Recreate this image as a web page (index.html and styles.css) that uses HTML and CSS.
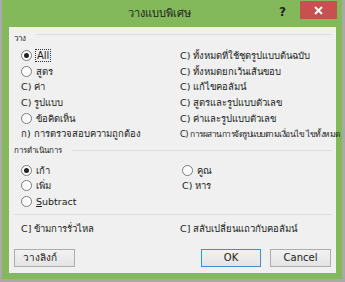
FILE: index.html
```html
<!DOCTYPE html>
<html lang="th">
<head>
<meta charset="utf-8">
<title>วางแบบพิเศษ</title>
<link rel="stylesheet" href="styles.css">
</head>
<body>
<div class="window">
  <div class="titlebar">
    <div class="title">วางแบบพิเศษ</div>
    <div class="help">?</div>
    <div class="close"><svg width="9" height="9" viewBox="0 0 9 9"><path d="M1 1L8 8M8 1L1 8" stroke="#fff" stroke-width="2"/></svg></div>
  </div>
  <div class="content">
    <div class="group-head"><span class="label">วาง</span><span class="rule"></span></div>
    <div class="cols paste">
      <div class="col">
        <div class="row"><span class="radio on"></span><span class="focus">All</span></div>
        <div class="row"><span class="radio"></span>สูตร</div>
        <div class="row">C) ค่า</div>
        <div class="row">C) รูปแบบ</div>
        <div class="row"><span class="radio"></span>ข้อคิดเห็น</div>
        <div class="row">ก) การตรวจสอบความถูกต้อง</div>
      </div>
      <div class="col">
        <div class="row">C) ทั้งหมดที่ใช้ชุดรูปแบบต้นฉบับ</div>
        <div class="row">C) ทั้งหมดยกเว้นเส้นขอบ</div>
        <div class="row">C) แก้ไขคอลัมน์</div>
        <div class="row">C) สูตรและรูปแบบตัวเลข</div>
        <div class="row">C) ค่าและรูปแบบตัวเลข</div>
        <div class="row tight">C) การผสานการจัดรูปแบบตามเงื่อนไข ไขทั้งหมด</div>
      </div>
    </div>
    <div class="group-head second"><span class="label">การดำเนินการ</span><span class="rule"></span></div>
    <div class="cols ops">
      <div class="col">
        <div class="row"><span class="radio on"></span>เก้า</div>
        <div class="row"><span class="radio"></span>เพิ่ม</div>
        <div class="row"><span class="radio"></span><span><u>S</u>ubtract</span></div>
      </div>
      <div class="col right">
        <div class="row"><span class="radio"></span>คูณ</div>
        <div class="row">C) หาร</div>
      </div>
    </div>
    <div class="sep"></div>
    <div class="cols checks">
      <div class="col"><div class="row">C] ข้ามการรั่วไหล</div></div>
      <div class="col"><div class="row">C] สลับเปลี่ยนแถวกับคอลัมน์</div></div>
    </div>
    <div class="buttons">
      <button class="btn link">วางลิงก์</button>
      <span class="spacer"></span>
      <button class="btn ok">OK</button>
      <button class="btn">Cancel</button>
    </div>
  </div>
</div>
</body>
</html>
```
FILE: styles.css
```css
html, body {
  margin: 0;
  padding: 0;
}
body {
  width: 345px;
  height: 282px;
  background: #a9a9a9;
  font-family: Tahoma, "DejaVu Sans", "Noto Sans", sans-serif;
  font-size: 10px;
  color: #1a1a1a;
  box-sizing: border-box;
  padding: 0 3px 3px 2px;
}
.window {
  height: 100%;
  background: #83b95b;
  display: flex;
  flex-direction: column;
}
.titlebar {
  height: 27px;
  display: flex;
  align-items: flex-start;
  flex: none;
}
.title {
  flex: 1;
  text-align: center;
  font-size: 11px;
  line-height: 12px;
  padding-top: 8px;
  padding-left: 38px;
  color: #222;
}
.help {
  font-size: 12px;
  font-weight: bold;
  line-height: 12px;
  padding-top: 6px;
  width: 12px;
  margin-right: 9px;
  color: #222;
}
.close {
  width: 37px;
  height: 18px;
  margin-top: 1px;
  margin-right: 5px;
  background: #c75050;
  display: flex;
  align-items: center;
  justify-content: center;
}
.content {
  flex: 1;
  margin: 0 6px 6px 7px;
  background: #f0f0f0;
  display: flex;
  flex-direction: column;
}
.group-head {
  display: flex;
  align-items: flex-start;
  padding: 7px 4px 0 5px;
  gap: 10px;
}
.group-head .label {
  font-size: 8px;
  line-height: 10px;
}
.group-head .rule {
  flex: 1;
  border-top: 1px solid #dcdcdc;
}
.group-head.second {
  padding-top: 8px;
}
.group-head.second .label {
  margin-top: -4px;
}
.cols {
  display: grid;
  grid-template-columns: 159px 1fr;
  padding-left: 12px;
}
.paste {
  margin-top: 4px;
}
.ops {
  margin-top: 7px;
}
.ops .right {
  padding-left: 2px;
}
.row {
  height: 15.6px;
  display: flex;
  align-items: center;
  white-space: nowrap;
  font-size: 9.5px;
}
.row.tight {
  letter-spacing: -0.5px;
  font-size: 8.4px;
}
.radio {
  width: 11px;
  height: 11px;
  box-sizing: border-box;
  border: 1px solid #7a7a7a;
  border-radius: 50%;
  background: #fff;
  margin-right: 4px;
  display: flex;
  align-items: center;
  justify-content: center;
  flex: none;
}
.radio.on::after {
  content: "";
  width: 5px;
  height: 5px;
  border-radius: 50%;
  background: #222;
}
.focus {
  outline: 1px dotted #333;
  line-height: 11px;
  padding: 0 1px;
  font-size: 10px;
}
.sep {
  margin: 5px 4px 0 5px;
  border-top: 1px solid #dcdcdc;
}
.checks {
  margin-top: 5px;
}
.buttons {
  display: flex;
  padding: 13px 5px 0 5px;
}
.spacer {
  flex: 1;
}
.btn {
  height: 18px;
  width: 61px;
  box-sizing: border-box;
  border: 1px solid #acacac;
  background: linear-gradient(#f2f2f2, #e4e4e4);
  font-family: inherit;
  font-size: 10px;
  color: #1a1a1a;
  padding: 0;
}
.btn.link {
  text-align: left;
  padding-left: 8px;
}
.btn.ok {
  width: 60px;
  border-color: #3c8fe0;
  margin-right: 9px;
}
```
